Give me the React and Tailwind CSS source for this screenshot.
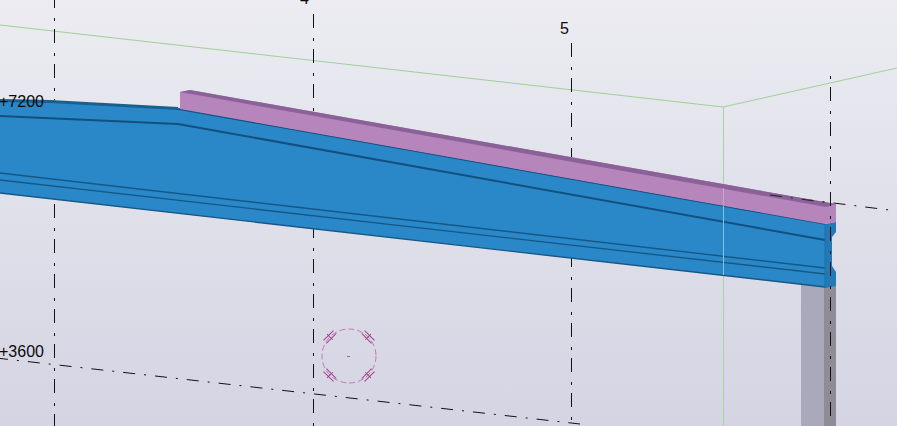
import React from 'react';

const gridDash = '14 10 3 8';
const slopeDash = '12 9 2 9';

// grid lines that sit behind the steel
const gridLines = [
  { x1: 54.5, y1: -6, x2: 54.5, y2: 426, dash: gridDash },
  { x1: 313.5, y1: 14, x2: 313.5, y2: 426, dash: gridDash },
  { x1: 571.5, y1: 43, x2: 571.5, y2: 426, dash: gridDash },
  { x1: -4, y1: 358, x2: 580, y2: 424, dash: slopeDash },
  { x1: 770, y1: 195, x2: 897, y2: 211, dash: slopeDash },
];

function ModelView() {
  return (
    <svg className="absolute inset-0" width="897" height="426" viewBox="0 0 897 426">
      {/* green work area */}
      <g stroke="#9fd097" strokeWidth="1" fill="none">
        <line x1="0" y1="25" x2="723" y2="107" />
        <line x1="723" y1="107" x2="897" y2="68" />
        <line x1="723.5" y1="107" x2="723.5" y2="426" stroke="#a6d69c" />
      </g>

      <g stroke="#111" strokeWidth="1" fill="none">
        {gridLines.map((l, i) => (
          <line key={i} x1={l.x1} y1={l.y1} x2={l.x2} y2={l.y2} strokeDasharray={l.dash} />
        ))}
      </g>

      {/* column */}
      <rect x="801" y="284" width="24" height="142" fill="#a9a9bb" />
      <rect x="824" y="284" width="12" height="142" fill="#8f8b97" />

      {/* rafter */}
      <polygon points="0,100 50,101 178,108 825,224 825,287 0,193" fill="#2b88c8" />
      <polyline points="0,100.5 50,101.5 178,108.5" fill="none" stroke="#17608f" strokeWidth="3" />
      <line x1="178" y1="109" x2="825" y2="224" stroke="#11507f" strokeWidth="1.5" />
      <polyline points="0,116 178,124 825,240" fill="none" stroke="#125080" strokeWidth="2" />
      <line x1="0" y1="173" x2="825" y2="268" stroke="#155886" strokeWidth="1.4" />
      <line x1="0" y1="180" x2="825" y2="274" stroke="#155886" strokeWidth="1.4" />
      <line x1="0" y1="193" x2="825" y2="287" stroke="#155886" strokeWidth="1.4" />

      {/* rafter end */}
      <polygon points="825,224 836,222 836,232 832,237 832,266 836,272 836,286 825,288" fill="#2379b5" />
      <line x1="825" y1="224" x2="825" y2="288" stroke="#1f6fa8" strokeWidth="1" />

      {/* work area edge showing through the rafter */}
      <line x1="723.5" y1="206" x2="723.5" y2="275" stroke="#7fc6dc" strokeWidth="1" />

      {/* purple plate */}
      <polygon points="180,92 190,90 836,204 836,222 825,224 180,109" fill="#b585bb" />
      <polygon points="180,92 190,90 836,204 826,207" fill="#8a6298" />
      <line x1="723.5" y1="188" x2="723.5" y2="205" stroke="#c9a6cc" strokeWidth="1" />

      {/* grid line drawn over the end of the steel */}
      <line x1="830.5" y1="72" x2="830.5" y2="426" stroke="#111" strokeWidth="1" strokeDasharray={gridDash} strokeDashoffset="20" />
      <line x1="770" y1="195" x2="830" y2="203" stroke="#222" strokeWidth="1" strokeDasharray={slopeDash} />

      {/* point marker */}
      <g fill="none">
        <circle cx="349" cy="356" r="27" stroke="#c27bb2" strokeWidth="1" strokeDasharray="6 3" />
        {[45, 135, 225, 315].map((a) => (
          <g key={a} transform={`rotate(${a} 349 356)`} stroke="#a0478b" strokeWidth="1">
            <line x1="342" y1="327" x2="356" y2="327" />
            <line x1="342" y1="331" x2="356" y2="331" />
            <line x1="349" y1="325" x2="349" y2="333" />
          </g>
        ))}
        <line x1="347" y1="356.5" x2="350" y2="356.5" stroke="#b2589c" strokeWidth="1" />
      </g>
    </svg>
  );
}

export default function App() {
  const labelFont = "font-['Liberation_Sans',sans-serif] text-[16px] leading-none text-[#0a0a0a]";
  return (
    <div className="relative w-[897px] h-[426px] overflow-hidden bg-gradient-to-b from-[#ececf2] to-[#d4d4e3]">
      <ModelView />
      <span className={`absolute left-[-1px] top-[94px] ${labelFont}`}>+7200</span>
      <span className={`absolute left-[-1px] top-[344px] ${labelFont}`}>+3600</span>
      <span className={`absolute left-[560px] top-[21px] ${labelFont}`}>5</span>
      <span className={`absolute left-[300px] top-[-9px] ${labelFont}`}>4</span>
    </div>
  );
}
